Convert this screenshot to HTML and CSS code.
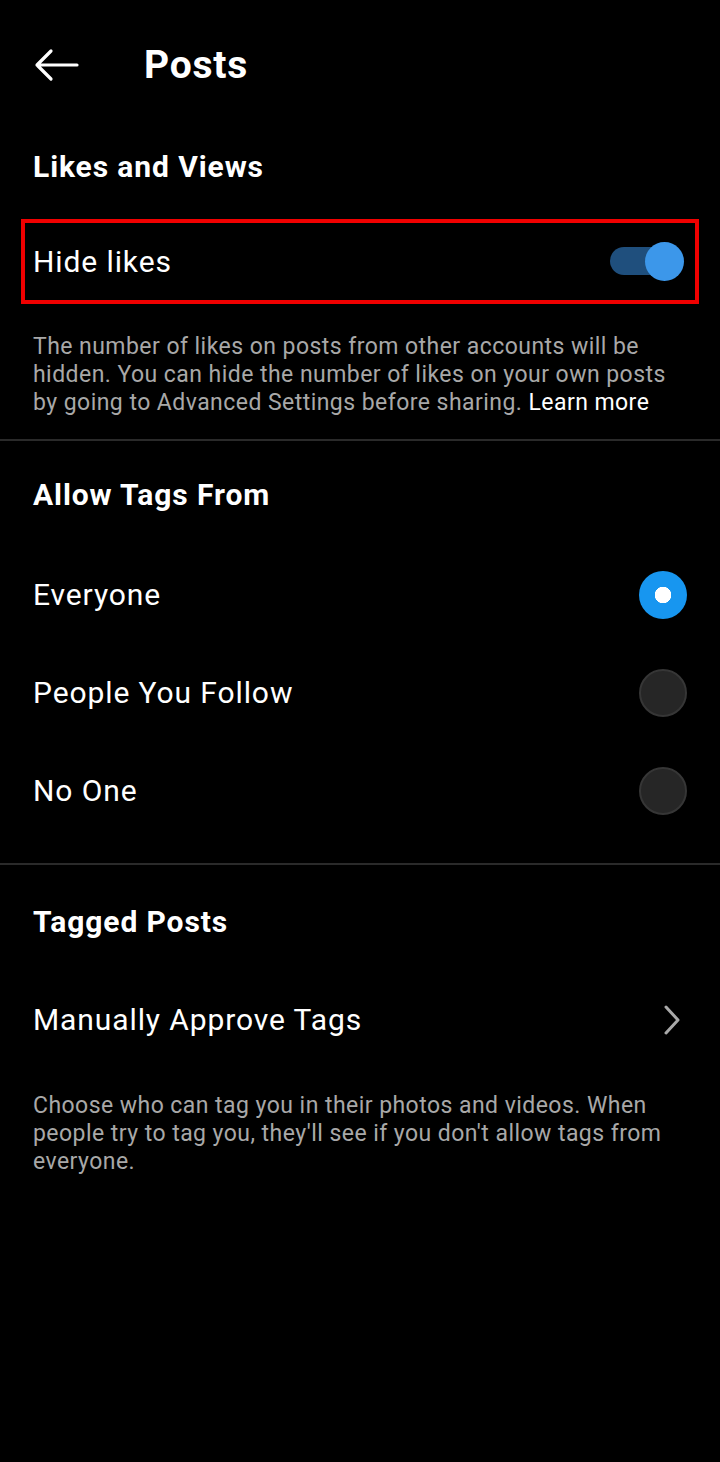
FILE: index.html
```html
<!DOCTYPE html>
<html lang="en">
<head>
<meta charset="utf-8">
<title>Posts</title>
<link rel="stylesheet" href="styles.css">
</head>
<body>
<div class="screen">
  <header class="topbar">
    <svg class="back" width="46" height="34" viewBox="0 0 46 34">
      <path d="M44 17H4M18 3L4 17L18 31" fill="none" stroke="#fff" stroke-width="3.2" stroke-linecap="round" stroke-linejoin="round"/>
    </svg>
    <h1 class="title">Posts</h1>
  </header>

  <h2 class="section-title first">Likes and Views</h2>

  <div class="highlight">
    <span class="row-label">Hide likes</span>
    <span class="toggle"><span class="track"></span><span class="knob"></span></span>
  </div>

  <p class="desc first-desc">The number of likes on posts from other accounts will be hidden. You can hide the number of likes on your own posts by going to Advanced Settings before sharing. <span class="link">Learn more</span></p>

  <div class="divider one"></div>

  <h2 class="section-title tags">Allow Tags From</h2>

  <div class="options">
    <div class="row"><span class="row-label">Everyone</span><span class="radio on"></span></div>
    <div class="row"><span class="row-label">People You Follow</span><span class="radio"></span></div>
    <div class="row"><span class="row-label">No One</span><span class="radio"></span></div>
  </div>

  <div class="divider two"></div>

  <h2 class="section-title tagged">Tagged Posts</h2>

  <div class="row approve">
    <span class="row-label">Manually Approve Tags</span>
    <svg class="chev" width="16" height="30" viewBox="0 0 16 30">
      <path d="M2 2L14 15L2 28" fill="none" stroke="#a9a9a9" stroke-width="3" stroke-linecap="round" stroke-linejoin="round"/>
    </svg>
  </div>

  <p class="desc last-desc">Choose who can tag you in their photos and videos. When people try to tag you, they'll see if you don't allow tags from everyone.</p>
</div>
</body>
</html>
```

FILE: styles.css
```css
html, body {
  margin: 0;
  padding: 0;
  background: #000;
}
body {
  font-family: Roboto, "Noto Sans", "Liberation Sans", sans-serif;
  color: #fff;
}
.screen {
  width: 720px;
  min-height: 1462px;
  background: #000;
}
.topbar {
  height: 130px;
  display: flex;
  align-items: center;
  padding-left: 33px;
}
.back {
  display: block;
}
.title {
  margin: 0 0 0 65px;
  font-size: 39px;
  font-weight: 700;
  line-height: 40px;
  letter-spacing: 0.8px;
}
.section-title {
  margin: 0;
  padding: 0 33px;
  font-size: 30px;
  font-weight: 700;
  line-height: 40px;
  letter-spacing: 0.9px;
}
.section-title.first { margin-top: 17px; }
.section-title.tags { margin-top: 34px; }
.section-title.tagged { margin-top: 37px; }

.highlight {
  margin: 32px 21px 0 21px;
  height: 77px;
  border: 4px solid #f00000;
  display: flex;
  align-items: center;
  justify-content: space-between;
  padding: 0 11px 0 8px;
}
.row-label {
  font-size: 30px;
  line-height: 40px;
  letter-spacing: 0.9px;
}
.toggle {
  position: relative;
  width: 74px;
  height: 39px;
  display: block;
}
.track {
  position: absolute;
  left: 0;
  top: 5px;
  width: 70px;
  height: 28px;
  border-radius: 14px;
  background: #1f4f7d;
}
.knob {
  position: absolute;
  right: 0;
  top: 0;
  width: 39px;
  height: 39px;
  border-radius: 50%;
  background: #3c97ea;
}
.desc {
  margin: 0;
  padding: 0 33px;
  font-size: 23px;
  line-height: 28px;
  letter-spacing: 0.45px;
  color: #a8a8a8;
}
.first-desc { margin-top: 29px; }
.last-desc { margin-top: 23px; }
.link { color: #fff; }

.divider {
  height: 2px;
  background: #2a2a2a;
}
.divider.one { margin-top: 22px; }
.divider.two { margin-top: 23px; }

.options { margin-top: 31px; }
.row {
  height: 98px;
  display: flex;
  align-items: center;
  justify-content: space-between;
  padding: 0 33px;
}
.radio {
  width: 44px;
  height: 44px;
  border-radius: 50%;
  background: #262626;
  border: 2px solid #363636;
  box-sizing: content-box;
}
.radio.on {
  width: 48px;
  height: 48px;
  border: 0;
  background: radial-gradient(circle, #fff 0 8px, #1796f0 8.5px);
}
.approve {
  margin-top: 29px;
  padding-right: 40px;
}
.chev { display: block; }
```
